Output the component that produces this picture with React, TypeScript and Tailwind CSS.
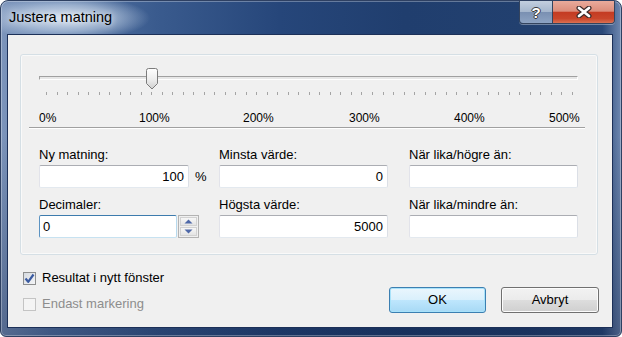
import React from "react";

const ticks = Array.from({ length: 51 }, (_, i) => i);
const scale = ["0%", "100%", "200%", "300%", "400%", "500%"];

const TextBox = ({ value, left, className }: { value: string; left?: boolean; className: string }) => (
  <div
    className={`h-[23px] bg-white border border-t-[#abadb3] border-l-[#e2e3ea] border-r-[#dbdfe6] border-b-[#e3e9ef] rounded-[2px] flex items-center text-[13px] leading-[16px] text-black ${
      left ? "justify-start pl-[3px]" : "justify-end pr-[4px]"
    } ${className}`}
  >
    {value}
  </div>
);

const Label = ({ text }: { text: string }) => (
  <div className="text-[13px] leading-[16px] text-black whitespace-nowrap">{text}</div>
);

const Arrow = ({ up }: { up?: boolean }) => (
  <svg width="9" height="5" viewBox="0 0 9 5">
    <path d={up ? "M0.5 4.5 L4.5 0.5 L8.5 4.5 Z" : "M0.5 0.5 L4.5 4.5 L8.5 0.5 Z"} fill="#4e68a8" />
  </svg>
);

export default function App() {
  return (
    <div className="w-[622px] h-[337px] relative flex flex-col rounded-t-[8px] rounded-b-[6px] overflow-hidden border border-[#2e4062] font-['Liberation_Sans',Arial,sans-serif] bg-[linear-gradient(180deg,rgba(255,255,255,0)_0%,rgba(255,255,255,0)_40%,rgba(10,25,60,0.35)_100%),linear-gradient(90deg,#7d95bb_0%,#5a79a8_8%,#3a5b8e_25%,#26467a_45%,#203e6e_65%,#22406f_85%,#2a4878_97%,#6f88b0_100%)] [box-shadow:inset_0_0_0_1px_rgba(255,255,255,0.3)]">
      {/* title glow */}
      <div className="absolute left-[-20px] top-[-6px] w-[170px] h-[46px] bg-[radial-gradient(ellipse_at_center,rgba(235,242,250,0.9)_0%,rgba(210,224,240,0.55)_40%,rgba(180,200,225,0)_70%)]" />

      {/* Title bar */}
      <div className="relative h-[33px] flex items-center pl-[8px] shrink-0">
        <span className="text-[14.5px] text-black [text-shadow:0_0_6px_rgba(255,255,255,0.9)]">Justera matning</span>
      </div>

      {/* Caption buttons */}
      <div className="absolute top-0 right-[6px] flex border border-t-0 border-[#34445e] rounded-b-[4px] overflow-hidden [box-shadow:0_1px_0_rgba(255,255,255,0.35)]">
        <div className="w-[33px] h-[22px] flex items-center justify-center border-r border-[#34445e] bg-[linear-gradient(180deg,#c3cfdf_0%,#a5b6cd_48%,#7a90b2_52%,#8da3c3_100%)]">
          <span className="text-[15px] font-bold leading-none text-white [text-shadow:-1px_0_#3a3a3a,1px_0_#3a3a3a,0_-1px_#3a3a3a,0_1px_#3a3a3a]">?</span>
        </div>
        <div className="w-[61px] h-[22px] flex items-center justify-center bg-[linear-gradient(180deg,#e9ab9c_0%,#dc8d7b_46%,#c43b22_52%,#c9462b_80%,#dc7052_100%)]">
          <svg width="16" height="12" viewBox="0 0 16 12">
            <path d="M3 2 L13 10 M13 2 L3 10" stroke="#3b2a2a" strokeWidth="5" strokeLinecap="round" />
            <path d="M3 2 L13 10 M13 2 L3 10" stroke="#ffffff" strokeWidth="2.8" strokeLinecap="round" />
          </svg>
        </div>
      </div>

      {/* Client area */}
      <div className="relative flex-1 ml-[6px] mr-[8px] mb-[8px] border border-[#1c3058] bg-[#f0f0f0] flex flex-col">
        {/* Group box */}
        <div className="mt-[19px] ml-[12px] w-[578px] h-[201px] border border-[#d5dfe5] rounded-[3px] flex flex-col [box-shadow:inset_0_0_0_1px_rgba(255,255,255,0.6)]">
          {/* Slider */}
          <div className="relative mt-[13px] ml-[18px] w-[539px] h-[21px]">
            <div className="absolute left-0 top-[8px] w-full h-[4px] border-t border-l border-[#a0a0a0] border-b border-r border-b-white border-r-white bg-[#e7e7e7]" />
            <svg width="12" height="22" viewBox="0 0 12 22" className="absolute left-[107px] top-0">
              <defs>
                <linearGradient id="thumbFill" x1="0" y1="0" x2="0" y2="1">
                  <stop offset="0" stopColor="#ffffff" />
                  <stop offset="0.55" stopColor="#ececec" />
                  <stop offset="1" stopColor="#cfcfcf" />
                </linearGradient>
              </defs>
              <path d="M0.5 2.5 Q0.5 0.5 2.5 0.5 H9.5 Q11.5 0.5 11.5 2.5 V15.5 L6 21 L0.5 15.5 Z" fill="url(#thumbFill)" stroke="#7c7c7c" />
            </svg>
          </div>

          {/* Ticks */}
          <div className="mt-[3px] ml-[25px] w-[527px] h-[3px] flex justify-between">
            {ticks.map(t => (
              <span key={t} className="w-px h-[3px] bg-[#a4a4a4]" />
            ))}
          </div>

          {/* Scale labels */}
          <div className="mt-[16px] ml-[18px] grid grid-cols-[100px_104px_106px_105px_95px_auto] text-[12px] leading-[14px] text-black">
            {scale.map(s => (
              <span key={s}>{s}</span>
            ))}
          </div>

          {/* Separator */}
          <div className="mt-[2px] ml-[8px] w-[556px] border-t border-[#a0a0a0] border-b border-b-white" />

          {/* Fields */}
          <div className="mt-[18px] ml-[18px] grid grid-cols-[180px_190px_169px] gap-y-[9px]">
            <div className="flex flex-col gap-[2px]">
              <Label text="Ny matning:" />
              <div className="flex items-center">
                <TextBox value="100" className="w-[150px]" />
                <span className="ml-[6px] text-[13px] leading-[16px]">%</span>
              </div>
            </div>
            <div className="flex flex-col gap-[2px]">
              <Label text="Minsta värde:" />
              <TextBox value="0" className="w-[169px]" />
            </div>
            <div className="flex flex-col gap-[2px]">
              <Label text="När lika/högre än:" />
              <TextBox value="" className="w-[169px]" />
            </div>

            <div className="flex flex-col gap-[2px]">
              <Label text="Decimaler:" />
              <div className="flex">
                <div className="w-[138px] h-[23px] bg-white border border-t-[#3d7bad] border-l-[#5c93c2] border-r-[#b7d9ed] border-b-[#c7e2f1] rounded-[2px] flex items-center pl-[3px] text-[13px] leading-[16px]">
                  0
                </div>
                <div className="ml-px w-[21px] h-[23px] border border-[#b3b3b3] flex flex-col gap-px p-px bg-[#f0f0f0]">
                  <div className="flex-1 flex items-center justify-center border border-[#d2d2d2] bg-[linear-gradient(180deg,#f7f7f7_0%,#e4e4e4_100%)]">
                    <Arrow up />
                  </div>
                  <div className="flex-1 flex items-center justify-center border border-[#d2d2d2] bg-[linear-gradient(180deg,#f7f7f7_0%,#e4e4e4_100%)]">
                    <Arrow />
                  </div>
                </div>
              </div>
            </div>
            <div className="flex flex-col gap-[2px]">
              <Label text="Högsta värde:" />
              <TextBox value="5000" className="w-[169px]" />
            </div>
            <div className="flex flex-col gap-[2px]">
              <Label text="När lika/mindre än:" />
              <TextBox value="" className="w-[169px]" />
            </div>
          </div>
        </div>

        {/* Bottom row */}
        <div className="mt-[15px] ml-[15px] mr-[13px] flex justify-between items-start">
          <div className="flex flex-col gap-[10px]">
            <div className="h-[16px] flex items-center">
              <div className="w-[13px] h-[13px] border border-[#8e8f8f] bg-[linear-gradient(135deg,#d6dae0_0%,#f4f5f7_100%)] flex items-center justify-center">
                <svg width="11" height="11" viewBox="0 0 11 11">
                  <path d="M1.5 5.5 L4.2 8.8 L9.5 1.5" fill="none" stroke="#3a5aa0" strokeWidth="2.2" strokeLinejoin="round" />
                </svg>
              </div>
              <span className="ml-[6px] text-[13px] leading-[16px] text-black">Resultat i nytt fönster</span>
            </div>
            <div className="h-[16px] flex items-center">
              <div className="w-[13px] h-[13px] border border-[#c4c4c4] bg-[#f4f4f4]" />
              <span className="ml-[6px] text-[13px] leading-[16px] text-[#8d8d8d]">Endast markering</span>
            </div>
          </div>
          <div className="mt-[17px] flex gap-[15px]">
            <button className="w-[97px] h-[26px] rounded-[3px] border border-[#3c7fb1] bg-[linear-gradient(180deg,#eaf6fd_0%,#d9f0fc_50%,#bee6fd_51%,#a7d9f5_100%)] [box-shadow:inset_0_0_0_1px_#a8e2fa] text-[13px] leading-[16px] text-black">
              OK
            </button>
            <button className="w-[98px] h-[26px] rounded-[3px] border border-[#707070] bg-[linear-gradient(180deg,#f2f2f2_0%,#ebebeb_50%,#dddddd_51%,#cfcfcf_100%)] [box-shadow:inset_0_0_0_1px_#fcfcfc] text-[13px] leading-[16px] text-black">
              Avbryt
            </button>
          </div>
        </div>
      </div>
    </div>
  );
}
